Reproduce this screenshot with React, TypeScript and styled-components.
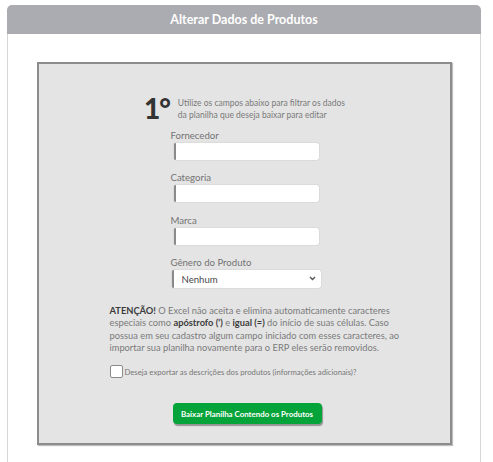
import React from "react";
import styled, { createGlobalStyle } from "styled-components";

const GlobalStyle = createGlobalStyle`
  html, body { margin: 0; padding: 0; background: #ffffff; }
  body { font-family: Lato, "Open Sans", Arial, sans-serif; }
  * { box-sizing: border-box; }
`;

const Card = styled.div`
  margin: 5px 0 0 7px;
  width: 474px;
`;

const Header = styled.div`
  height: 29px;
  border-radius: 5px 5px 0 0;
  background: #abacb1;
  color: #ffffff;
  font-weight: 700;
  font-size: 12.5px;
  display: flex;
  align-items: center;
  justify-content: center;
`;

const Body = styled.div`
  border-left: 1px solid #d6d6d6;
  border-right: 1px solid #d6d6d6;
  padding: 28px 28px 30px 29px;
`;

const Panel = styled.div`
  height: 383px;
  border: 2px solid #8c8c8c;
  background: #e4e4e4;
  box-shadow: 1px 1px 1px rgba(0, 0, 0, 0.25);
  display: flex;
  flex-direction: column;
  align-items: center;
  padding-top: 30px;
`;

const StepRow = styled.div`
  display: flex;
  align-items: flex-start;
  gap: 8px;
`;

const StepNumber = styled.div`
  font-size: 28px;
  font-weight: 900;
  line-height: 28px;
  color: #333333;
  letter-spacing: -1px;
`;

const StepText = styled.div`
  font-size: 8.5px;
  line-height: 12.4px;
  color: #7a7a7a;
  padding-top: 2.5px;
`;

const Fields = styled.div`
  width: 149px;
  margin-top: 8px;
  margin-left: 3px;
  display: flex;
  flex-direction: column;
`;

const Field = styled.div`
  display: flex;
  flex-direction: column;
  margin-bottom: 12.4px;
  &:last-child { margin-bottom: 0; }
`;

const Label = styled.label`
  font-size: 9.6px;
  line-height: 12px;
  color: #737373;
  margin-left: -1px;
  margin-bottom: 1px;
`;

const TextInput = styled.input`
  width: 145px;
  height: 17px;
  margin: 0 0 0 2px;
  border: none;
  border-left: 2px solid #8a8a8a;
  border-radius: 2px;
  background: #ffffff;
  box-shadow: 0 0 1px rgba(0, 0, 0, 0.35);
  outline: none;
  padding: 0 4px;
`;

const SelectWrap = styled.div`
  position: relative;
  width: 149px;
  height: 18px;
`;

const Select = styled.select`
  appearance: none;
  -webkit-appearance: none;
  display: block;
  width: 149px;
  height: 18px;
  margin: 0;
  border: none;
  border-left: 2px solid #8a8a8a;
  border-radius: 2px;
  background: #ffffff;
  box-shadow: 0 0 1px rgba(0, 0, 0, 0.35);
  font-family: Lato, Arial, sans-serif;
  font-size: 9.6px;
  color: #4a4a4a;
  padding: 0 0 0 8px;
  outline: none;
`;

const Chevron = styled.svg`
  position: absolute;
  right: 5px;
  top: 6px;
  width: 7px;
  height: 5px;
  pointer-events: none;
`;

const Warning = styled.p`
  margin: 17px 0 0 0;
  width: 270px;
  font-size: 9.3px;
  line-height: 12.3px;
  color: #7a7a7a;
  white-space: nowrap;
  b { color: #3c3c3c; font-weight: 700; }
`;

const CheckRow = styled.label`
  width: 270px;
  margin-top: 11px;
  display: flex;
  align-items: center;
  gap: 2px;
  font-size: 7.7px;
  color: #777777;
  white-space: nowrap;
`;

const CheckBox = styled.span`
  width: 13px;
  height: 13px;
  flex: none;
  background: #ffffff;
  border: 1px solid #8a8a8a;
  border-radius: 2px;
`;

const Button = styled.button`
  margin-top: 25px;
  margin-left: 5px;
  width: 149px;
  height: 21px;
  padding: 0;
  border: none;
  border-radius: 4px;
  background: #05a43a;
  color: #ffffff;
  font-family: Lato, Arial, sans-serif;
  font-weight: 700;
  font-size: 7.9px;
  white-space: nowrap;
  box-shadow: 1px 2px 1px rgba(0, 0, 0, 0.35);
  cursor: pointer;
`;

export default function App() {
  return (
    <>
      <GlobalStyle />
      <Card>
        <Header>Alterar Dados de Produtos</Header>
        <Body>
          <Panel>
            <StepRow>
              <StepNumber>1°</StepNumber>
              <StepText>
                Utilize os campos abaixo para filtrar os dados
                <br />
                da planilha que deseja baixar para editar
              </StepText>
            </StepRow>
            <Fields>
              <Field>
                <Label>Fornecedor</Label>
                <TextInput type="text" />
              </Field>
              <Field>
                <Label>Categoria</Label>
                <TextInput type="text" />
              </Field>
              <Field>
                <Label>Marca</Label>
                <TextInput type="text" />
              </Field>
              <Field>
                <Label>Gênero do Produto</Label>
                <SelectWrap>
                  <Select defaultValue="Nenhum">
                    <option>Nenhum</option>
                  </Select>
                  <Chevron viewBox="0 0 7 5">
                    <path d="M1 1 L3.5 3.5 L6 1" fill="none" stroke="#555" strokeWidth="1.4" />
                  </Chevron>
                </SelectWrap>
              </Field>
            </Fields>
            <Warning>
              <b>ATENÇÃO!</b> O Excel não aceita e elimina automaticamente caracteres
              <br />
              especiais como <b>apóstrofo (')</b> e <b>igual (=)</b> do início de suas células. Caso
              <br />
              possua em seu cadastro algum campo iniciado com esses caracteres, ao
              <br />
              importar sua planilha novamente para o ERP eles serão removidos.
            </Warning>
            <CheckRow>
              <CheckBox />
              Deseja exportar as descrições dos produtos (informações adicionais)?
            </CheckRow>
            <Button>Baixar Planilha Contendo os Produtos</Button>
          </Panel>
        </Body>
      </Card>
    </>
  );
}
